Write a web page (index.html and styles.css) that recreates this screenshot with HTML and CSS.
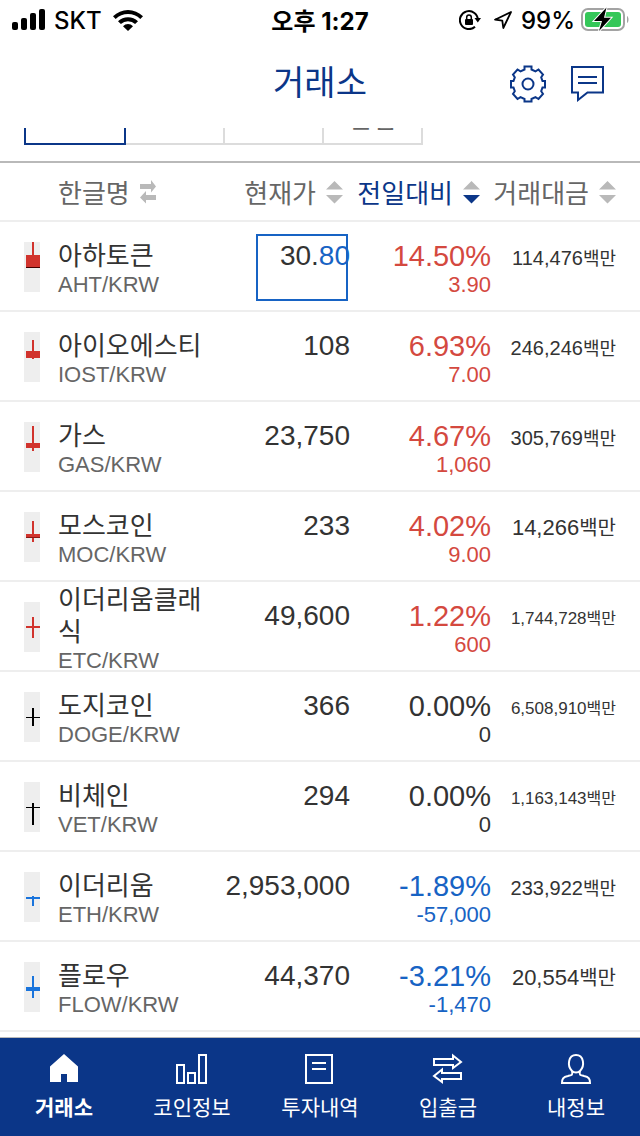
FILE: index.html
```html
<!DOCTYPE html>
<html lang="ko">

<head>
    <meta charset="UTF-8">
    <meta name="viewport" content="width=device-width, initial-scale=1.0">
    <title>거래소</title>
    <link rel="stylesheet" href="styles.css">
</head>

<body>
    <!-- Status bar -->
    <div class="status-bar">
        <div class="status-left">
            <svg width="34" height="22" viewBox="0 0 34 22">
                <rect x="0" y="13" width="6" height="8" rx="2" />
                <rect x="9" y="9" width="6" height="12" rx="2" />
                <rect x="18" y="4" width="6" height="17" rx="2" />
                <rect x="27" y="0" width="6" height="21" rx="2" />
            </svg>
            <span>SKT</span>
            <svg width="30" height="22" viewBox="0 0 30 22">
                <path d="M0 7.2a21.5 21.5 0 0 1 30 0l-2.700 2.800a17.500 17.500 0 0 0-24.600 0z" />
                <path d="M5 12.300a14.300 14.300 0 0 1 20 0l-2.900 2.800a10.200 10.200 0 0 0-14.200 0z" />
                <path d="M10 17.200a7 7 0 0 1 10 0l-5 4.800z" />
            </svg>
        </div>
        <div class="status-time">오후 1:27</div>
        <div class="status-right">
            <svg width="22" height="20" viewBox="0 0 22 20">
                <path d="M18.900 10A9 9 0 1 0 16 16.700" fill="none" stroke="#000" stroke-width="2" />
                <path d="M15.500 8h6.500l-3.200 4.500z" />
                <rect x="6" y="9" width="8" height="6" rx="1" />
                <path d="M7.700 9V7.200a2.300 2.300 0 0 1 4.600 0V9" fill="none" stroke="#000" stroke-width="1.500" />
            </svg>
            <svg class="icon-location" width="20" height="20" viewBox="0 0 20 20">
                <path d="M18 2L2 9.700l7.300 1L10.300 18z" fill="none" stroke="#000" stroke-width="1.800" stroke-linejoin="round" />
            </svg>
            <span>99%</span>
            <svg class="icon-battery" width="48" height="26" viewBox="0 0 48 26">
                <rect x="1" y="2" width="42" height="21" rx="6" fill="none" stroke="#a3a3a3" stroke-width="2" />
                <path d="M46 9c2 1 2 6 0 7z" fill="#a3a3a3" />
                <rect x="4" y="5" width="36" height="15" rx="3" fill="#35c759" />
                <path d="M25.500 0.500L13 14h8l-3 10L30 10.700h-7z" fill="#000" stroke="#fff" stroke-width="2" paint-order="stroke" />
            </svg>
        </div>
    </div>

    <!-- Title -->
    <header class="header">
        <h1>거래소</h1>
        <div class="header-buttons">
            <button type="button" aria-label="설정">
                <svg width="36" height="38" viewBox="0 0 36 38">
                    <path d="M14.500 1.500h7v3l4 1.800 3-1.800 4.500 5-1.800 2.800 1.300 3.700h2.500v6.500h-2.500l-1.300 3.700 1.800 2.800-4.500 5-3-1.800-4 1.800v2.500h-7V34l-4-1.800-3 1.800-4.500-5 1.800-2.800-1.300-3.700H1V16h2.500l1.300-3.700L3 9.500l4.500-5 3 1.800 4-1.800z" />
                    <circle cx="18" cy="19" r="5.500" />
                </svg>
            </button>
            <button type="button" aria-label="채팅">
                <svg width="34" height="36" viewBox="0 0 34 36">
                    <path d="M2 1h31v25.500H17.500L8 34v-7.500H2zM8 11h19M8 17h19" />
                </svg>
            </button>
        </div>
    </header>

    <!-- Market tabs, scrolled under the header -->
    <div class="tabs">
        <button type="button" class="tab active">KRW</button>
        <button type="button" class="tab">BTC</button>
        <button type="button" class="tab">USDT</button>
        <button type="button" class="tab">관심</button>
    </div>

    <!-- Coin list -->
    <table class="market">
        <colgroup>
            <col class="col-candle">
            <col>
            <col class="col-price">
            <col class="col-change">
            <col class="col-volume">
        </colgroup>
        <thead>
            <tr>
                <th></th>
                <th class="name">
                    <button type="button">한글명
                        <svg width="17" height="24" viewBox="0 0 17 24">
                            <path d="M0 4h11V0l5 6.500-5 6V9H0zM16 15H6v-4l-6 6.500 6 6V20h10z" />
                        </svg>
                    </button>
                </th>
                <th class="price">
                    <button type="button">현재가
                        <svg width="17" height="24" viewBox="0 0 17 24">
                            <path d="M0 9.500L8.500 1 17 9.500zM0 15l8.500 8.500L17 15z" />
                        </svg>
                    </button>
                </th>
                <th class="change sorted">
                    <button type="button">전일대비
                        <svg width="17" height="24" viewBox="0 0 17 24">
                            <path d="M0 9.500L8.500 1 17 9.500z" />
                            <path class="on" d="M0 15l8.500 8.500L17 15z" />
                        </svg>
                    </button>
                </th>
                <th class="volume">
                    <button type="button">거래대금
                        <svg width="17" height="24" viewBox="0 0 17 24">
                            <path d="M0 9.500L8.500 1 17 9.500zM0 15l8.500 8.500L17 15z" />
                        </svg>
                    </button>
                </th>
            </tr>
        </thead>
        <tbody>
            <tr class="up">
                <td class="candle">
                    <svg width="16" height="50"><rect x="8" y="0" width="2" height="26" /><rect x="2" y="13" width="14" height="13" /><rect class="edge" x="2" y="25" width="14" height="1" /></svg>
                </td>
                <td class="name"><div class="coin"><strong>아하토큰</strong><span>AHT/KRW</span></div></td>
                <td class="price"><div class="flash">30.<em>80</em></div></td>
                <td class="change">14.50%<span>3.90</span></td>
                <td class="volume">114,476<span>백만</span></td>
            </tr>
            <tr class="up">
                <td class="candle">
                    <svg width="16" height="50"><rect x="8" y="8" width="2" height="19" /><rect x="2" y="19" width="14" height="7" /></svg>
                </td>
                <td class="name"><div class="coin"><strong>아이오에스티</strong><span>IOST/KRW</span></div></td>
                <td class="price">108</td>
                <td class="change">6.93%<span>7.00</span></td>
                <td class="volume">246,246<span>백만</span></td>
            </tr>
            <tr class="up">
                <td class="candle">
                    <svg width="16" height="50"><rect x="8" y="4" width="2" height="25" /><rect x="2" y="21" width="14" height="5" /></svg>
                </td>
                <td class="name"><div class="coin"><strong>가스</strong><span>GAS/KRW</span></div></td>
                <td class="price">23,750</td>
                <td class="change">4.67%<span>1,060</span></td>
                <td class="volume">305,769<span>백만</span></td>
            </tr>
            <tr class="up">
                <td class="candle">
                    <svg width="16" height="50"><rect x="8" y="9" width="2" height="21" /><rect x="2" y="22" width="14" height="4" /><rect class="edge" x="2" y="25" width="14" height="1" opacity="0.5" /></svg>
                </td>
                <td class="name"><div class="coin"><strong>모스코인</strong><span>MOC/KRW</span></div></td>
                <td class="price">233</td>
                <td class="change">4.02%<span>9.00</span></td>
                <td class="volume large">14,266<span>백만</span></td>
            </tr>
            <tr class="up">
                <td class="candle">
                    <svg width="16" height="50"><rect x="8" y="15" width="2" height="21" /><rect x="2" y="24" width="14" height="2" /></svg>
                </td>
                <td class="name"><div class="coin"><strong>이더리움클래식</strong><span>ETC/KRW</span></div></td>
                <td class="price">49,600</td>
                <td class="change">1.22%<span>600</span></td>
                <td class="volume small">1,744,728<span>백만</span></td>
            </tr>
            <tr>
                <td class="candle">
                    <svg width="16" height="50"><rect x="8" y="16" width="2" height="18" /><rect x="2" y="25" width="14" height="1" /></svg>
                </td>
                <td class="name"><div class="coin"><strong>도지코인</strong><span>DOGE/KRW</span></div></td>
                <td class="price">366</td>
                <td class="change">0.00%<span>0</span></td>
                <td class="volume small">6,508,910<span>백만</span></td>
            </tr>
            <tr>
                <td class="candle">
                    <svg width="16" height="50"><rect x="8" y="21" width="2" height="22" /><rect x="2" y="25" width="14" height="1" /></svg>
                </td>
                <td class="name"><div class="coin"><strong>비체인</strong><span>VET/KRW</span></div></td>
                <td class="price">294</td>
                <td class="change">0.00%<span>0</span></td>
                <td class="volume small">1,163,143<span>백만</span></td>
            </tr>
            <tr class="down">
                <td class="candle">
                    <svg width="16" height="50"><rect x="8" y="24" width="2" height="10" /><rect x="2" y="25" width="14" height="2" /></svg>
                </td>
                <td class="name"><div class="coin"><strong>이더리움</strong><span>ETH/KRW</span></div></td>
                <td class="price">2,953,000</td>
                <td class="change">-1.89%<span>-57,000</span></td>
                <td class="volume">233,922<span>백만</span></td>
            </tr>
            <tr class="down">
                <td class="candle">
                    <svg width="16" height="50"><rect x="8" y="14" width="2" height="22" /><rect x="2" y="25" width="14" height="4" /></svg>
                </td>
                <td class="name"><div class="coin"><strong>플로우</strong><span>FLOW/KRW</span></div></td>
                <td class="price">44,370</td>
                <td class="change">-3.21%<span>-1,470</span></td>
                <td class="volume large">20,554<span>백만</span></td>
            </tr>
        </tbody>
    </table>

    <!-- Bottom menu -->
    <nav class="bottom-nav">
        <a href="#" class="active">
            <svg width="32" height="32" viewBox="0 0 32 32">
                <path d="M16 1l14 12.500V29H19v-8h-6v8H2V13.500z" fill="#fff" stroke="none" />
            </svg>
            거래소
        </a>
        <a href="#">
            <svg width="32" height="32" viewBox="0 0 32 32">
                <path d="M1 12h7v18H1zM12 20h7v10h-7zM23 2h7v28h-7z" />
            </svg>
            코인정보
        </a>
        <a href="#">
            <svg width="32" height="32" viewBox="0 0 32 32">
                <path d="M2 2h26v28H2zM8 10h14M8 16h14" />
            </svg>
            투자내역
        </a>
        <a href="#">
            <svg width="32" height="32" viewBox="0 0 32 32">
                <path d="M2 6h19V2.500l8 6.500-8 6v-3H2zM29 20H10v-3.500L2 23l8 6v-3h19z" />
            </svg>
            입출금
        </a>
        <a href="#">
            <svg width="32" height="32" viewBox="0 0 32 32">
                <path d="M12 18C7 13 8 2 16 2s9 11 4 16c-1 4 0 4 4 5 5 1 6 3 6 7H2c0-4 1-6 6-7 4-1 5-1 4-5zM12 18c2 2 6 2 8 0" />
            </svg>
            내정보
        </a>
    </nav>
</body>

</html>
```
FILE: styles.css
```css
* {
    box-sizing: border-box;
}

body {
    display: flex;
    flex-direction: column;
    min-height: 100vh;
    margin: 0;
    background-color: #fff;
    color: #333;
    font-family: "Liberation Sans", "Noto Sans CJK KR", sans-serif;
}

button {
    padding: 0;
    border: none;
    background: none;
    color: inherit;
    font: inherit;
}

svg {
    display: block;
    flex: none;
}

/* status bar */
.status-bar {
    display: grid;
    grid-template-columns: 1fr auto 1fr;
    align-items: center;
    height: 40px;
    padding: 0 12px;
    color: #000;
    font-family: Inter, "Noto Sans CJK KR", sans-serif;
    font-size: 24px;
    font-weight: 500;
}

.status-left,
.status-right {
    display: flex;
    align-items: center;
    gap: 8px;
}

.status-right {
    justify-content: flex-end;
}

.status-left span {
    margin-right: 3px;
}

.status-time {
    padding-bottom: 2px;
    font-weight: 700;
}

.icon-location {
    margin-left: 4px;
}

.icon-battery {
    margin-right: -1px;
    margin-left: -2px;
}

/* title */
.header {
    position: relative;
    z-index: 1;
    display: grid;
    grid-template-columns: 1fr auto 1fr;
    align-items: center;
    height: 88px;
    padding: 0 36px;
    background-color: #fff;
    color: #0b3688;
}

.header h1 {
    grid-column: 2;
    margin: 0;
    padding-bottom: 8px;
    font-size: 34px;
    font-weight: 400;
}

.header-buttons {
    display: flex;
    align-items: center;
    justify-content: flex-end;
    gap: 24px;
}

.header-buttons svg {
    fill: none;
    stroke: #0b3688;
    stroke-width: 2;
}

/* market tabs */
.tabs {
    display: flex;
    height: 52px;
    margin: -35px 24px 16px;
}

.tab {
    width: 99px;
    border: solid #dcdcdc;
    border-width: 2px 2px 2px 0;
    color: #666;
    font-size: 26px;
    line-height: 32px;
}

.tab.active {
    width: 102px;
    border: 2px solid #0b3688;
    color: #0b3688;
}

/* coin list */
.market {
    width: 100%;
    border-top: 2px solid #b9b9b9;
    border-spacing: 0;
    table-layout: fixed;
}

.col-candle {
    width: 58px;
}

.col-price {
    width: 144px;
}

.col-change {
    width: 141px;
}

.col-volume {
    width: 149px;
}

.market th,
.market td {
    padding: 0;
    border-bottom: 2px solid #eee;
    text-align: right;
    white-space: nowrap;
}

.market th {
    height: 59px;
    color: #666;
    font-size: 26px;
    font-weight: 400;
}

.market th button {
    display: inline-flex;
    align-items: center;
    gap: 10px;
}

.market th svg {
    fill: #b9b9b9;
}

.market th .on {
    fill: #0b3688;
}

.market th.name {
    text-align: left;
}

.market th.price {
    padding-right: 7px;
}

.market th.change {
    padding-right: 11px;
}

.market th.sorted {
    color: #0b3688;
}

.market th.volume {
    padding-right: 24px;
}

.market td {
    height: 90px;
    padding-top: 18px;
    font-size: 28px;
    line-height: 32px;
    vertical-align: top;
}

.market td.candle {
    padding: 20px 0 0 24px;
}

.candle svg {
    background-color: #eee;
    fill: #000;
}

.up .candle svg {
    fill: #d1332d;
}

.down .candle svg {
    fill: #1974dc;
}

.market .edge {
    fill: #400;
}

.market td.name {
    padding: 0;
    text-align: left;
    white-space: normal;
}

.coin {
    display: flex;
    flex-direction: column;
    justify-content: center;
    height: 88px;
    padding-top: 6px;
    word-break: break-all;
}

.coin strong {
    font-size: 26px;
    font-weight: 400;
}

.coin span {
    color: #666;
    font-size: 22px;
    line-height: 26px;
}

.market td.change {
    font-size: 29px;
}

.change span {
    display: block;
    font-size: 22px;
    line-height: 26px;
}

.up .change {
    color: #d4493f;
}

.down .change {
    color: #1763c4;
}

/* price that has just moved */
.flash {
    position: relative;
}

.flash em {
    color: #1763c4;
    font-style: normal;
}

.flash::after {
    content: "";
    position: absolute;
    top: -6px;
    right: 2px;
    box-sizing: border-box;
    width: 92px;
    height: 67px;
    border: 2px solid #1763c4;
}

.market td.volume {
    padding: 20px 24px 0 0;
    font-size: 20px;
}

.volume span {
    font-size: 18px;
}

.market td.large {
    font-size: 22px;
}

.large span {
    font-size: 20px;
}

.market td.small {
    padding-top: 21px;
    font-size: 17px;
}

.small span {
    font-size: 16px;
}

/* bottom menu */
.bottom-nav {
    display: flex;
    height: 99px;
    margin-top: auto;
    padding-top: 15px;
    border-top: 1px solid #b9b9b9;
    background-color: #0b3688;
}

.bottom-nav a {
    display: flex;
    flex: 1;
    flex-direction: column;
    align-items: center;
    gap: 6px;
    color: #fff;
    font-size: 21px;
    line-height: 34px;
    text-decoration: none;
}

.bottom-nav svg {
    fill: none;
    stroke: #fff;
    stroke-width: 2;
}

.bottom-nav .active {
    font-weight: 700;
}
```
